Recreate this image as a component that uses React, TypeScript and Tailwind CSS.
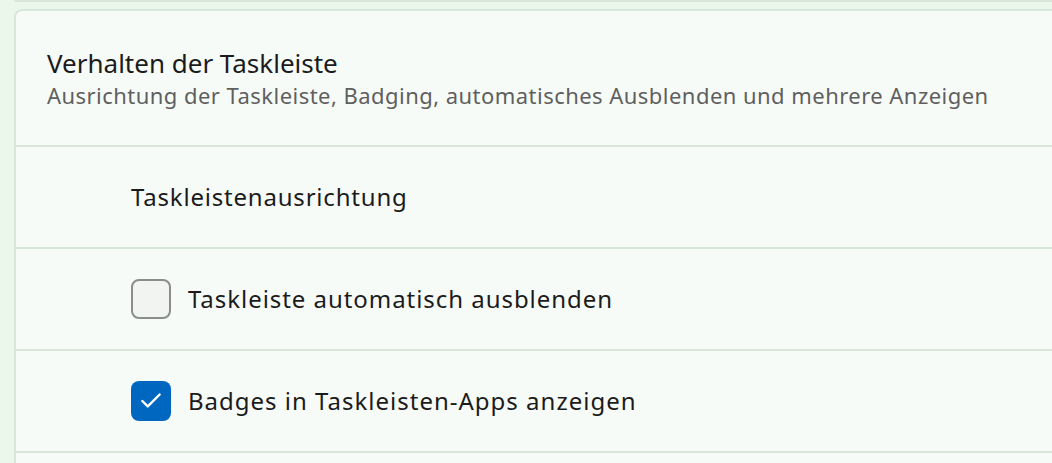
import { Check } from "lucide-react";

const FONT = { fontFamily: "'Noto Sans', 'Open Sans', sans-serif" } as const;

function Row({ children }: { children: React.ReactNode }) {
  return (
    <div className="flex h-[102px] items-center border-b-2 border-[#d8e7da] pl-[115px]">
      {children}
    </div>
  );
}

function CheckBox({ checked }: { checked: boolean }) {
  return checked ? (
    <span className="flex h-[40px] w-[40px] shrink-0 items-center justify-center rounded-[8px] bg-[#0067c0]">
      <Check size={26} color="#FFFFFF" strokeWidth={2.2} />
    </span>
  ) : (
    <span className="h-[40px] w-[40px] shrink-0 rounded-[8px] border-2 border-[#8b8d8b] bg-[#f1f4f1]" />
  );
}

export default function App() {
  return (
    <div className="h-[463px] w-[1052px] overflow-hidden bg-[#ebf7eb]" style={FONT}>
      {/* bottom of the card above */}
      <div className="ml-[14px] h-[2px] rounded-bl-[8px] bg-[#d8e7da]" />

      <div className="ml-[14px] mt-[7px] rounded-tl-[8px] border-2 border-r-0 border-[#d8e7da] bg-[#f7fbf8]">
        {/* header */}
        <div className="flex h-[136px] flex-col justify-center border-b-2 border-[#d8e7da] pl-[31px]">
          <div className="text-[26px] leading-[34px] text-[#1b1b1b]">Verhalten der Taskleiste</div>
          <div className="text-[22px] leading-[30px] tracking-[0.46px] text-[#5f5f5f]">
            Ausrichtung der Taskleiste, Badging, automatisches Ausblenden und mehrere Anzeigen
          </div>
        </div>

        <Row>
          <span className="text-[24px] tracking-[0.8px] text-[#1b1b1b]">Taskleistenausrichtung</span>
        </Row>
        <Row>
          <CheckBox checked={false} />
          <span className="ml-[17px] text-[24px] tracking-[0.95px] text-[#1b1b1b]">
            Taskleiste automatisch ausblenden
          </span>
        </Row>
        <Row>
          <CheckBox checked />
          <span className="ml-[17px] text-[24px] tracking-[1px] text-[#1b1b1b]">
            Badges in Taskleisten-Apps anzeigen
          </span>
        </Row>
        <Row>
          <span />
        </Row>
      </div>
    </div>
  );
}
